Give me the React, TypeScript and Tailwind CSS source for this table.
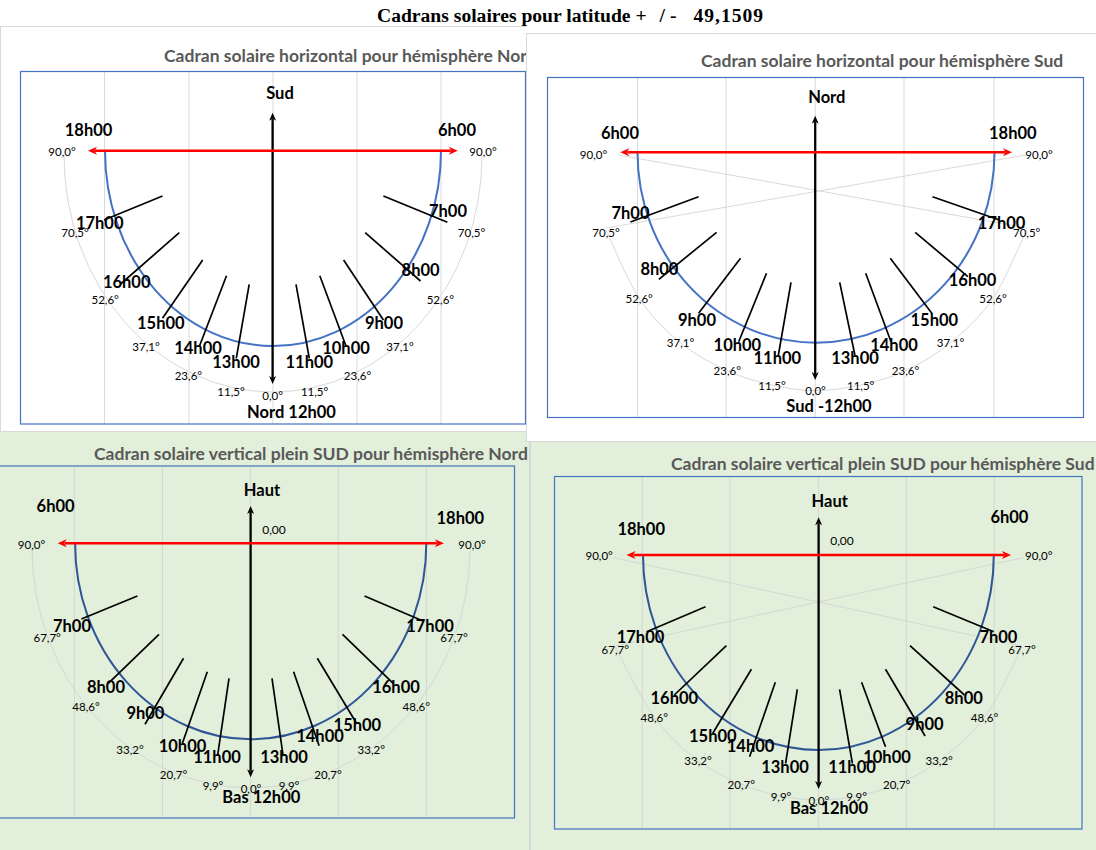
import React from 'react';

type Seg = [number, number, number, number];
type Label = [string, number, number];
type Pt = [number, number];

interface Dial {
  box: [number, number, number, number];
  grid: number[];
  gridColor: string;
  axis: [number, number, number];
  red: [number, number, number];
  blue: [number, number, number, number];
  blueColor: string;
  greyArc?: [number, number, number, number];
  greyPts?: Pt[];
  cross?: Seg[];
  greyColor: string;
  hourLines: Seg[];
  hours: Label[];
  names: Label[];
  degrees: Label[];
  small?: Label[];
}

// catmull-rom through the points, as a cubic path
function smooth(pts: Pt[]) {
  let d = `M${pts[0][0]},${pts[0][1]}`;
  for (let i = 0; i < pts.length - 1; i++) {
    const p0 = pts[i - 1] || pts[i];
    const p1 = pts[i];
    const p2 = pts[i + 1];
    const p3 = pts[i + 2] || p2;
    const c1 = [p1[0] + (p2[0] - p0[0]) / 6, p1[1] + (p2[1] - p0[1]) / 6];
    const c2 = [p2[0] - (p3[0] - p1[0]) / 6, p2[1] - (p3[1] - p1[1]) / 6];
    d += ` C${c1[0]},${c1[1]} ${c2[0]},${c2[1]} ${p2[0]},${p2[1]}`;
  }
  return d;
}

// notched arrow head, tip at (x,y) pointing along (dx,dy)
function head(x: number, y: number, dx: number, dy: number, len: number, w: number) {
  const bx = x - dx * len;
  const by = y - dy * len;
  const nx = x - dx * len * 0.72;
  const ny = y - dy * len * 0.72;
  const px = -dy * (w / 2);
  const py = dx * (w / 2);
  return `${x},${y} ${bx + px},${by + py} ${nx},${ny} ${bx - px},${by - py}`;
}

const TL: Dial = {
  box: [20.5, 71.5, 505, 352.5],
  grid: [104.5, 189, 273, 357, 441],
  gridColor: '#d9d9d9',
  axis: [272.6, 112.7, 384],
  red: [150.7, 88, 457.8],
  blue: [273, 150.7, 168, 195.3],
  blueColor: '#4472c4',
  greyArc: [273, 155, 209, 237],
  greyColor: '#d9d9d9',
  hourLines: [
    [162.5, 196, 104, 220],
    [179.3, 232.7, 120.6, 284],
    [202.7, 260, 162.5, 318.3],
    [226.5, 275.7, 199.2, 346.7],
    [249.2, 284.3, 236.3, 358.3],
    [296, 284.3, 309.3, 358.3],
    [319.8, 275.7, 346, 346],
    [343.6, 260, 383.4, 320],
    [365.2, 232.7, 420.5, 281],
    [383.4, 196, 447.4, 222.3],
  ],
  hours: [
    ['18h00', 88.6, 130], ['6h00', 457, 130], ['17h00', 99.7, 223.3], ['7h00', 448, 210.7],
    ['16h00', 126.7, 281.7], ['8h00', 420.6, 270], ['15h00', 160.8, 322.7], ['9h00', 384, 322.7],
    ['14h00', 198, 348.3], ['10h00', 346, 348.3], ['13h00', 236, 361.7], ['11h00', 309.3, 361.7],
  ],
  names: [['Sud', 280, 93], ['Nord 12h00', 291.5, 411.7]],
  degrees: [
    ['90,0°', 62, 151.7], ['90,0°', 483, 151.7], ['70,5°', 75, 232.7], ['70,5°', 471.5, 232.7],
    ['52,6°', 105.2, 299.3], ['52,6°', 440.4, 299.3], ['37,1°', 146, 346.7], ['37,1°', 400, 346.7],
    ['23,6°', 188.4, 375], ['23,6°', 357.5, 375], ['11,5°', 231, 391], ['11,5°', 314.6, 391],
    ['0,0°', 272.7, 395],
  ],
};

const TR: Dial = {
  box: [547.5, 77.5, 536, 340],
  grid: [637.6, 726, 815.2, 904, 994],
  gridColor: '#d9d9d9',
  axis: [815.2, 115.7, 380],
  red: [152.3, 620.3, 1012],
  blue: [816, 152.3, 178.5, 190.4],
  blueColor: '#4472c4',
  greyPts: [
    [606, 230], [639.2, 298.3], [680.5, 342.7], [727.3, 370.7], [772, 385], [815.5, 390.7],
    [860.7, 385], [905.5, 370.7], [950.5, 342.7], [993, 298.3], [1026.7, 230],
  ],
  cross: [[618.4, 155, 1026.7, 228], [1026, 155, 606, 228]],
  greyColor: '#d9d9d9',
  hourLines: [
    [698.6, 196.7, 630.4, 222],
    [716.6, 232.3, 658.9, 279.3],
    [740.5, 258.3, 698.6, 313.3],
    [766.5, 273.3, 738.7, 341.7],
    [791, 282.3, 778.4, 355],
    [839.7, 282.3, 854.9, 355],
    [865.7, 273.3, 891, 341.7],
    [890.3, 258.3, 931.8, 313.3],
    [915.2, 232.3, 967.9, 276.7],
    [932.5, 196.7, 999.3, 220],
  ],
  hours: [
    ['6h00', 620, 133.3], ['18h00', 1012.8, 133.3], ['7h00', 630.5, 212.7], ['17h00', 1001.6, 223.3],
    ['8h00', 659.4, 269], ['16h00', 972.6, 280], ['9h00', 697, 320], ['15h00', 934.3, 320],
    ['10h00', 737.4, 345], ['14h00', 894, 345], ['11h00', 777.3, 357.7], ['13h00', 855, 357.7],
  ],
  names: [['Nord', 826.8, 97.3], ['Sud -12h00', 829, 405.7]],
  degrees: [
    ['90,0°', 593.5, 154], ['90,0°', 1039, 154], ['70,5°', 606, 232.3], ['70,5°', 1026.7, 232.3],
    ['52,6°', 639.2, 298.3], ['52,6°', 993, 298.3], ['37,1°', 680.5, 342.7], ['37,1°', 950.5, 342.7],
    ['23,6°', 727.3, 370.7], ['23,6°', 905.5, 370.7], ['11,5°', 772, 385], ['11,5°', 860.7, 385],
    ['0,0°', 815.5, 390.7],
  ],
};

const BL: Dial = {
  box: [-3, 466, 517.5, 352],
  grid: [74.4, 162.5, 250.6, 338.3, 426.4],
  gridColor: '#d3d8d3',
  axis: [250.6, 506, 777.3],
  red: [543.3, 57.7, 443.9],
  blue: [250.7, 543.3, 175.6, 196],
  blueColor: '#2f5597',
  greyArc: [251, 548, 219, 240],
  greyColor: '#d3d8d6',
  hourLines: [
    [137.4, 596, 81.4, 619],
    [159, 634.3, 108.3, 683.3],
    [183.5, 658.3, 145, 724.3],
    [207.3, 671.7, 182.4, 743.3],
    [229, 678.3, 217.7, 755],
    [272, 678.3, 283, 755],
    [293.6, 671.7, 319.1, 745.7],
    [317.3, 658.3, 356.5, 723.3],
    [342.5, 634.3, 393.2, 683.3],
    [364.5, 596, 423, 621],
  ],
  hours: [
    ['6h00', 55.6, 506], ['18h00', 460.3, 517.7], ['7h00', 72, 626], ['17h00', 430, 626],
    ['8h00', 106, 687.3], ['16h00', 396, 687.3], ['9h00', 145.4, 713.3], ['15h00', 357.4, 725],
    ['10h00', 182.5, 746], ['14h00', 320, 735.7], ['11h00', 217, 757.3], ['13h00', 284, 757.3],
  ],
  names: [['Haut', 262, 490], ['Bas 12h00', 261.3, 796.7]],
  small: [['0,00', 274, 529]],
  degrees: [
    ['90,0°', 31.5, 544], ['90,0°', 472, 544], ['67,7°', 47.2, 637.3], ['67,7°', 454, 637.3],
    ['48,6°', 86, 706.7], ['48,6°', 416.3, 706.7], ['33,2°', 130, 749], ['33,2°', 371.3, 749],
    ['20,7°', 173.5, 774], ['20,7°', 328, 774], ['9,9°', 213, 785.3], ['9,9°', 289, 785.3],
    ['0,0°', 251, 788.3],
  ],
};

const BR: Dial = {
  box: [554.5, 476.5, 527.5, 352.5],
  grid: [642.3, 730, 818.6, 906.4, 994.2],
  gridColor: '#d3d8d3',
  axis: [818.6, 517.3, 789],
  red: [555, 626.5, 1011],
  blue: [818.4, 555, 175.4, 195],
  blueColor: '#2f5597',
  greyPts: [
    [615.3, 647], [654.3, 717.3], [698, 760.7], [741.3, 784.3], [781, 796], [818.8, 800],
    [856.6, 796], [896.7, 784.3], [939.2, 760.7], [984.5, 717.3], [1022, 647],
  ],
  cross: [[613.7, 557.7, 1022, 646], [1023, 557.7, 615.3, 646]],
  greyColor: '#d3d8d6',
  hourLines: [
    [705.5, 606.7, 646.7, 631.7],
    [726.4, 645.7, 674.3, 695],
    [751.4, 669.3, 712.8, 733.3],
    [775.3, 682.3, 749.6, 756.7],
    [797.3, 689.3, 785.6, 763.3],
    [839.6, 689.3, 852.4, 763.3],
    [861.6, 682.3, 885.5, 746.7],
    [885.5, 669.3, 925.1, 736],
    [910, 645.7, 964.4, 695],
    [933.2, 606.7, 993.8, 631.7],
  ],
  hours: [
    ['18h00', 641.2, 529], ['6h00', 1009.4, 517.3], ['17h00', 640.5, 637.3], ['7h00', 998.4, 637.3],
    ['16h00', 674.3, 698.3], ['8h00', 963.8, 698.3], ['15h00', 712.8, 736], ['9h00', 924.6, 724.3],
    ['14h00', 750.6, 746], ['10h00', 887, 756.7], ['13h00', 785, 767.3], ['11h00', 852, 767.3],
  ],
  names: [['Haut', 829.7, 501], ['Bas 12h00', 829, 808.3]],
  small: [['0,00', 842, 540]],
  degrees: [
    ['90,0°', 599.2, 555.7], ['90,0°', 1038.8, 555.7], ['67,7°', 615.3, 649], ['67,7°', 1022, 649],
    ['48,6°', 654.3, 717.3], ['48,6°', 984.5, 717.3], ['33,2°', 698, 760.7], ['33,2°', 939.2, 760.7],
    ['20,7°', 741.3, 784.3], ['20,7°', 896.7, 784.3], ['9,9°', 781, 796], ['9,9°', 856.6, 796],
    ['0,0°', 818.8, 800],
  ],
};

const FONT = 'Lato, "Open Sans", sans-serif';

function DialChart({ d, vb }: { d: Dial; vb: [number, number, number, number] }) {
  const [bx, by, bw, bh] = d.box;
  const [ax, aTop, aBot] = d.axis;
  const [ry, rl, rr] = d.red;
  const [cx, cy, ex, ey] = d.blue;
  return (
    <svg width={vb[2]} height={vb[3]} viewBox={vb.join(' ')} className="block shrink-0">
      {/* gridlines and plot frame */}
      {d.grid.map((gx) => (
        <line key={gx} x1={gx} y1={by} x2={gx} y2={by + bh} stroke={d.gridColor} strokeWidth={1} />
      ))}
      <rect x={bx} y={by} width={bw} height={bh} fill="none" stroke="#4472c4" strokeWidth={1.2} />

      {/* degree curve */}
      {d.greyArc && (
        <path
          d={`M${d.greyArc[0] - d.greyArc[2]},${d.greyArc[1]} A${d.greyArc[2]},${d.greyArc[3]} 0 0 0 ${d.greyArc[0] + d.greyArc[2]},${d.greyArc[1]}`}
          fill="none"
          stroke={d.greyColor}
          strokeWidth={1}
        />
      )}
      {d.greyPts && <path d={smooth(d.greyPts)} fill="none" stroke={d.greyColor} strokeWidth={1} />}
      {d.cross?.map((s, i) => (
        <line key={i} x1={s[0]} y1={s[1]} x2={s[2]} y2={s[3]} stroke={d.greyColor} strokeWidth={1} />
      ))}

      {/* dial edge */}
      <path
        d={`M${cx - ex},${cy} A${ex},${ey} 0 0 0 ${cx + ex},${cy}`}
        fill="none"
        stroke={d.blueColor}
        strokeWidth={2}
      />

      {/* hour lines */}
      {d.hourLines.map((s, i) => (
        <line key={i} x1={s[0]} y1={s[1]} x2={s[2]} y2={s[3]} stroke="#000" strokeWidth={1.7} />
      ))}

      {/* gnomon axis */}
      <line x1={ax} y1={aTop + 6} x2={ax} y2={aBot - 6} stroke="#000" strokeWidth={2.3} />
      <polygon points={head(ax, aTop, 0, -1, 8, 7)} fill="#000" />
      <polygon points={head(ax, aBot, 0, 1, 8, 7)} fill="#000" />

      {/* 6h - 18h line */}
      <line x1={rl + 7} y1={ry} x2={rr - 7} y2={ry} stroke="#ff0000" strokeWidth={2.6} />
      <polygon points={head(rl, ry, -1, 0, 9, 8)} fill="#ff0000" />
      <polygon points={head(rr, ry, 1, 0, 9, 8)} fill="#ff0000" />

      <g fontFamily={FONT} textAnchor="middle" dominantBaseline="central" fill="#000">
        {d.degrees.map(([t, x, y], i) => (
          <text key={'d' + i} x={x} y={y} fontSize={11.5}>
            {t}
          </text>
        ))}
        {d.small?.map(([t, x, y], i) => (
          <text key={'s' + i} x={x} y={y} fontSize={12}>
            {t}
          </text>
        ))}
        {d.hours.map(([t, x, y], i) => (
          <text key={'h' + i} x={x} y={y} fontSize={16.5} fontWeight={700}>
            {t}
          </text>
        ))}
        {d.names.map(([t, x, y], i) => (
          <text key={'n' + i} x={x} y={y} fontSize={16.5} fontWeight={700}>
            {t}
          </text>
        ))}
      </g>
    </svg>
  );
}

const titleClass = "whitespace-nowrap font-['Lato','Open_Sans',sans-serif] text-[17.5px] leading-[20px] font-bold text-[#595959]";

export default function App() {
  return (
    <div className="w-[1096px] h-[850px] overflow-hidden bg-white">
      {/* Sheet title */}
      <div className="h-[26px] pl-[377px] pt-[6px] whitespace-nowrap font-['Liberation_Serif','Times_New_Roman',serif] text-[19.6px] leading-[20px] font-bold text-black">
        <span>Cadrans solaires pour latitude +</span>
        <span className="ml-[13px]">/ -</span>
        <span className="ml-[17px] tracking-[1px]">49,1509</span>
      </div>

      <div className="flex">
        {/* Northern hemisphere column */}
        <div className="w-[526px] shrink-0 flex flex-col">
          <section className="w-[526px] h-[405px] flex flex-col overflow-hidden border-t border-l border-[#d9d9d9] bg-white">
            <div className={`${titleClass} h-[39px] pt-[19px] pl-[163px]`}>
              Cadran solaire horizontal pour hémisphère Nord
            </div>
            <DialChart d={TL} vb={[1, 66, 525, 365]} />
          </section>
          <section className="w-[530px] h-[419px] flex flex-col overflow-hidden border-t border-r border-[#d9d9d9] bg-[#e2efda]">
            <div className={`${titleClass} h-[32px] pt-[12px] pl-[94px]`}>
              Cadran solaire vertical plein SUD pour hémisphère Nord
            </div>
            <DialChart d={BL} vb={[0, 464, 529, 386]} />
          </section>
        </div>

        {/* Southern hemisphere column */}
        <div className="flex-1 pt-[7px] flex flex-col">
          <section className="h-[409px] flex flex-col overflow-hidden border-t border-l border-b border-[#d9d9d9] bg-white">
            <div className={`${titleClass} h-[37px] pt-[17px] pl-[174px]`}>
              Cadran solaire horizontal pour hémisphère Sud
            </div>
            <DialChart d={TR} vb={[527, 71, 569, 370]} />
          </section>
          <section className="ml-[4px] h-[408px] flex flex-col overflow-hidden border-l border-[#d9d9d9] bg-[#e2efda]">
            <div className={`${titleClass} h-[32px] pt-[12px] pl-[140px]`}>
              Cadran solaire vertical plein SUD pour hémisphère Sud
            </div>
            <DialChart d={BR} vb={[531, 474, 565, 376]} />
          </section>
        </div>
      </div>
    </div>
  );
}
